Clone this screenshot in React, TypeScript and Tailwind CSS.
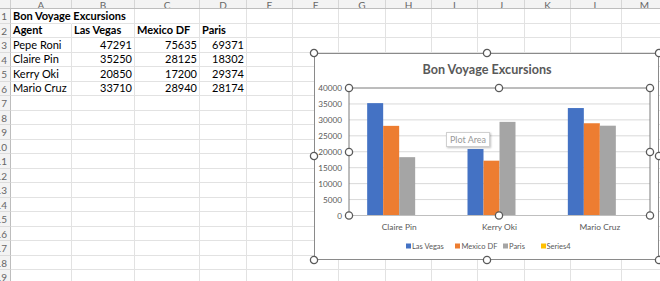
import React from "react";

const colW = [
  "w-[61px]",
  "w-[63px]",
  "w-[65px]",
  "w-[47px]",
  "w-[46px]",
  "w-[46px]",
  "w-[47px]",
  "w-[46px]",
  "w-[46px]",
  "w-[47px]",
  "w-[46px]",
  "w-[51px]",
  "w-[46px]",
];
const letters = ["A", "B", "C", "D", "E", "F", "G", "H", "I", "J", "K", "L", "M"];

type Cell = { t: string; b?: boolean; r?: boolean };
const data: Record<number, Cell[]> = {
  1: [{ t: "Bon Voyage Excursions", b: true }],
  2: [
    { t: "Agent", b: true },
    { t: "Las Vegas", b: true },
    { t: "Mexico DF", b: true },
    { t: "Paris", b: true },
  ],
  3: [{ t: "Pepe Roni" }, { t: "47291", r: true }, { t: "75635", r: true }, { t: "69371", r: true }],
  4: [{ t: "Claire Pin" }, { t: "35250", r: true }, { t: "28125", r: true }, { t: "18302", r: true }],
  5: [{ t: "Kerry Oki" }, { t: "20850", r: true }, { t: "17200", r: true }, { t: "29374", r: true }],
  6: [{ t: "Mario Cruz" }, { t: "33710", r: true }, { t: "28940", r: true }, { t: "28174", r: true }],
};

const series = [
  { name: "Las Vegas", color: "#4472C4", vals: [35250, 20850, 33710] },
  { name: "Mexico DF", color: "#ED7D31", vals: [28125, 17200, 28940] },
  { name: "Paris", color: "#A5A5A5", vals: [18302, 29374, 28174] },
  { name: "Series4", color: "#FFC000", vals: [0, 0, 0] },
];
const cats = ["Claire Pin", "Kerry Oki", "Mario Cruz"];

const PL = 35;
const PR = 336;
const PT = 35;
const PB = 162.5;
const yOf = (v: number) => PB - (v * (PB - PT)) / 40000;

function Handle({ x, y }: { x: number; y: number }) {
  return <circle cx={x} cy={y} r={3.6} fill="#fff" stroke="#5a5a5a" strokeWidth={1.3} />;
}

function Chart() {
  const gw = (PR - PL) / 3;
  return (
    <div className="absolute left-[314px] top-[53px] w-[345px] h-[207px] border border-[#8a8a8a] bg-white">
      <svg
        className="absolute left-[-1px] top-[-1px] overflow-visible"
        width={347}
        height={209}
        style={{ fontFamily: "Lato, 'Liberation Sans', sans-serif" }}
      >
        <text x={173} y={21} textAnchor="middle" fontSize={12.6} fontWeight={700} fill="#595959">
          Bon Voyage Excursions
        </text>
        {Array.from({ length: 9 }).map((_, k) => {
          const y = yOf(k * 5000);
          return (
            <g key={k}>
              {k > 0 && k < 8 && <line x1={PL} x2={PR} y1={y} y2={y} stroke="#d9d9d9" strokeWidth={1} />}
              <text x={28} y={y + 3} textAnchor="end" fontSize={8.2} fill="#595959">
                {k * 5000}
              </text>
            </g>
          );
        })}
        {cats.map((c, i) => {
          const cx = PL + gw * (i + 0.5);
          return (
            <g key={c}>
              {series.map((s, j) => {
                const x = cx - 32 + j * 16;
                const y = yOf(s.vals[i]);
                return s.vals[i] > 0 ? (
                  <rect key={s.name} x={x} y={y} width={16} height={PB - y} fill={s.color} />
                ) : null;
              })}
              <text x={cx} y={177} textAnchor="middle" fontSize={8.4} fill="#595959">
                {c}
              </text>
            </g>
          );
        })}
        <line x1={PL} x2={PR} y1={PT} y2={PT} stroke="#7a7a7a" strokeWidth={1} />
        <line x1={PL} x2={PL} y1={PT} y2={PB} stroke="#7a7a7a" strokeWidth={1} />
        <line x1={PR} x2={PR} y1={PT} y2={PB} stroke="#7a7a7a" strokeWidth={1} />
        <line x1={PL} x2={PR} y1={PB} y2={PB} stroke="#bfbfbf" strokeWidth={1} />
        {[
          { x: 92, tx: 98, s: series[0] },
          { x: 141, tx: 147.5, s: series[1] },
          { x: 189, tx: 195, s: series[2] },
          { x: 227, tx: 232.5, s: series[3] },
        ].map((l) => (
          <g key={l.s.name}>
            <rect x={l.x} y={190.5} width={5} height={5} fill={l.s.color} />
            <text x={l.tx} y={196} fontSize={7.5} fill="#595959">
              {l.s.name}
            </text>
          </g>
        ))}
        <Handle x={PL} y={PT} />
        <Handle x={185} y={PT} />
        <Handle x={PR} y={PT} />
        <Handle x={PL} y={99} />
        <Handle x={PR} y={99} />
        <Handle x={PL} y={PB} />
        <Handle x={185} y={PB} />
        <Handle x={PR} y={PB} />
        <Handle x={0} y={0} />
        <Handle x={173} y={0} />
        <Handle x={345} y={0} />
        <Handle x={0} y={103} />
        <Handle x={345} y={103} />
        <Handle x={0} y={207} />
        <Handle x={173} y={207} />
        <Handle x={345} y={207} />
      </svg>
      <div className="absolute left-[131px] top-[78px] w-[44px] h-[15px] flex items-center justify-center bg-white border border-[#d0d0d0] shadow-[1px_1px_2px_rgba(0,0,0,0.25)] text-[9px] text-[#9a9a9a] font-['Lato','Liberation_Sans',sans-serif]">
        Plot Area
      </div>
    </div>
  );
}

export default function App() {
  const rows = Array.from({ length: 19 }, (_, i) => i + 1);
  return (
    <div className="relative w-[660px] h-[281px] overflow-hidden bg-white font-['Lato','Liberation_Sans',sans-serif] text-black">
      <div className="flex h-[9px] bg-[#f3f3f3] border-b border-[#bdbdbd]">
        <div className="w-[11px] shrink-0 border-r border-[#cfcfcf]" />
        {letters.map((l, i) => (
          <div
            key={l}
            className={`${colW[i]} shrink-0 border-r border-[#d6d6d6] flex justify-center items-end overflow-hidden`}
          >
            <span className="text-[10px] leading-[10px] text-[#666] translate-y-[2px]">{l}</span>
          </div>
        ))}
      </div>
      {rows.map((r) => {
        const cells = data[r] || [];
        return (
          <div key={r} className="flex h-[14.5px]">
            <div className="w-[11px] shrink-0 bg-[#f3f3f3] border-r border-b border-r-[#bdbdbd] border-b-[#dcdcdc] overflow-hidden relative">
              <span className="absolute right-[3px] top-0 text-[10px] leading-[15px] text-[#666]">{r}</span>
            </div>
            {letters.map((l, i) => {
              const c = cells[i];
              const noRight = r === 1 && i === 0;
              return (
                <div
                  key={l}
                  className={`${colW[i]} shrink-0 border-b border-[#e2e2e2] ${
                    noRight ? "border-r border-r-transparent" : "border-r"
                  } flex items-center ${c && c.r ? "justify-end pr-[2px]" : "pl-[2px]"} ${
                    noRight ? "overflow-visible" : "overflow-hidden"
                  }`}
                >
                  {c && (
                    <span className={`text-[11px] leading-[14px] whitespace-nowrap ${c.b ? "font-bold" : ""}`}>
                      {c.t}
                    </span>
                  )}
                </div>
              );
            })}
          </div>
        );
      })}
      <Chart />
    </div>
  );
}
